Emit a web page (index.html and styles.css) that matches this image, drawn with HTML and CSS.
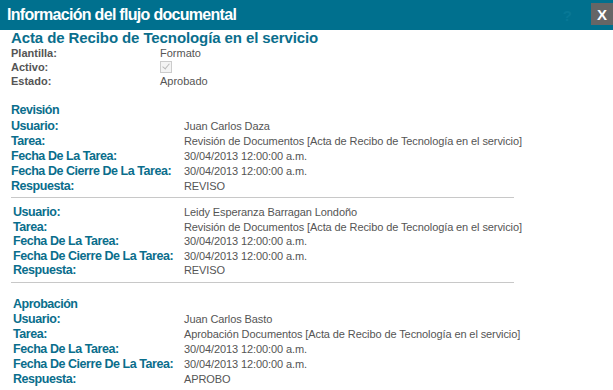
FILE: index.html
```html
<!DOCTYPE html>
<html lang="es">
<head>
    <meta charset="UTF-8">
    <title>Información del flujo documental</title>
    <link rel="stylesheet" href="styles.css">
</head>
<body>
    <div class="dialog">
        <div class="dialog-bar">
            <span class="dialog-title">Información del flujo documental</span>
            <span class="help">?</span>
            <span class="close">X</span>
        </div>

        <div class="content">
            <h2 class="doc-title">Acta de Recibo de Tecnología en el servicio</h2>
            <div class="meta">
                <span class="meta-label">Plantilla:</span>
                <span class="meta-value">Formato</span>
                <span class="meta-label">Activo:</span>
                <span class="meta-value"><span class="check"></span></span>
                <span class="meta-label">Estado:</span>
                <span class="meta-value">Aprobado</span>
            </div>

            <h3 class="step">Revisión</h3>
            <div class="task">
                <span class="label">Usuario:</span><span class="value">Juan Carlos Daza</span>
                <span class="label">Tarea:</span><span class="value">Revisión de Documentos [Acta de Recibo de Tecnología en el servicio]</span>
                <span class="label">Fecha De La Tarea:</span><span class="value">30/04/2013 12:00:00 a.m.</span>
                <span class="label">Fecha De Cierre De La Tarea:</span><span class="value">30/04/2013 12:00:00 a.m.</span>
                <span class="label">Respuesta:</span><span class="value">REVISO</span>
            </div>
            <hr class="sep">
            <div class="task task-inner">
                <span class="label">Usuario:</span><span class="value">Leidy Esperanza Barragan Londoño</span>
                <span class="label">Tarea:</span><span class="value">Revisión de Documentos [Acta de Recibo de Tecnología en el servicio]</span>
                <span class="label">Fecha De La Tarea:</span><span class="value">30/04/2013 12:00:00 a.m.</span>
                <span class="label">Fecha De Cierre De La Tarea:</span><span class="value">30/04/2013 12:00:00 a.m.</span>
                <span class="label">Respuesta:</span><span class="value">REVISO</span>
            </div>
            <hr class="sep">

            <h3 class="step step-inner">Aprobación</h3>
            <div class="task task-last">
                <span class="label">Usuario:</span><span class="value">Juan Carlos Basto</span>
                <span class="label">Tarea:</span><span class="value">Aprobación Documentos [Acta de Recibo de Tecnología en el servicio]</span>
                <span class="label">Fecha De La Tarea:</span><span class="value">30/04/2013 12:00:00 a.m.</span>
                <span class="label">Fecha De Cierre De La Tarea:</span><span class="value">30/04/2013 12:00:00 a.m.</span>
                <span class="label">Respuesta:</span><span class="value">APROBO</span>
            </div>
        </div>
    </div>
</body>
</html>
```

FILE: styles.css
```css
body {
    margin: 0;
    font-family: 'Liberation Sans', Arial, sans-serif;
    background: #fff;
    overflow: hidden;
}
.dialog-bar {
    display: flex;
    align-items: center;
    height: 30px;
    background: #00708e;
    padding-left: 7px;
}
.dialog-title {
    flex: 1;
    color: #fff;
    font-size: 16px;
    font-weight: bold;
    letter-spacing: -0.7px;
}
.help {
    color: #087896;
    font-size: 15px;
    font-weight: bold;
    margin-right: 19px;
}
.close {
    display: flex;
    align-items: center;
    justify-content: center;
    width: 22px;
    height: 22px;
    background: #666;
    color: #fff;
    font-size: 15px;
    font-weight: bold;
    margin-bottom: 2px;
}
.content {
    padding: 0 11px;
}
.doc-title {
    margin: 0;
    color: #0a6e8c;
    font-size: 15px;
    line-height: 16px;
    font-weight: bold;
    letter-spacing: -0.1px;
}
.meta {
    display: grid;
    grid-template-columns: 149px auto;
    grid-auto-rows: 14px;
    align-items: center;
    font-size: 11px;
    color: #555;
}
.meta-label {
    font-weight: bold;
}
.check {
    display: block;
    width: 10px;
    height: 10px;
    border: 1px solid #ccc;
    background: #f4f4f4;
    position: relative;
}
.check::after {
    content: "";
    position: absolute;
    left: 3px;
    top: 0;
    width: 3px;
    height: 6px;
    border: solid #bbb;
    border-width: 0 1px 1px 0;
    transform: rotate(40deg);
}
.step {
    margin: 15px 0 0;
    color: #0a6e8c;
    font-size: 12.5px;
    letter-spacing: -0.5px;
    line-height: 15px;
    font-weight: bold;
}
.step-inner {
    margin-top: 14px;
    padding-left: 2px;
}
.task {
    display: grid;
    grid-template-columns: 173px auto;
    grid-auto-rows: 15px;
    align-items: center;
}
.task-inner {
    grid-template-columns: 171px auto;
    grid-auto-rows: 14.5px;
    padding-left: 2px;
    margin-top: 7px;
}
.task-last {
    grid-template-columns: 171px auto;
    padding-left: 2px;
}
.label {
    color: #0a6e8c;
    font-size: 12.5px;
    letter-spacing: -0.45px;
    font-weight: bold;
    white-space: nowrap;
}
.value {
    color: #555;
    font-size: 11px;
    letter-spacing: -0.1px;
}
.sep {
    width: 503px;
    margin: 4px 0 0;
    border: 0;
    border-top: 1px solid #c8c8c8;
}
```
